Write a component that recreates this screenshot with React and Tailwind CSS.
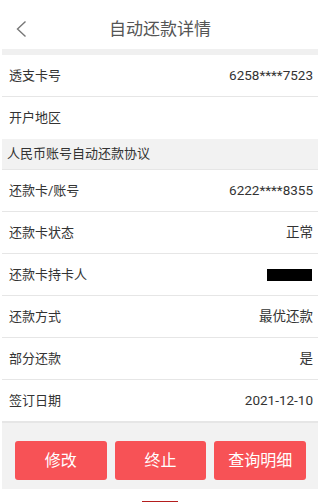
import React from "react";

const font = { fontFamily: 'Roboto, "Noto Sans CJK SC", sans-serif' };

function Row({ label, value, last }) {
  return (
    <div className={`flex items-center justify-between h-[42px] pl-[7px] pr-[5px] ${last ? "" : "border-b border-[#e6e6e6]"}`}>
      <span className="text-[13px] text-[#333]">{label}</span>
      {value}
    </div>
  );
}

export default function App() {
  const v = (t) => <span className="text-[13.5px] text-[#333]">{t}</span>;
  return (
    <div className="w-[320px] h-[502px] bg-white overflow-hidden flex flex-col" style={font}>
      <div className="relative h-[49px] flex items-center justify-center shrink-0">
        <svg className="absolute left-[15px] top-[20px]" width="13" height="18" viewBox="0 0 13 18" fill="none">
          <path d="M10.5 1.5 L2.5 9 L10.5 16.5" stroke="#777" strokeWidth="1.4" />
        </svg>
        <span className="text-[17px] text-[#555] mt-[10px]">自动还款详情</span>
      </div>
      <div className="h-[6px] bg-[#f0f0f0] shrink-0 mx-[2px]" />
      <div className="mx-[2px] flex flex-col">
        <Row label="透支卡号" value={v("6258****7523")} />
        <Row label="开户地区" value={null} last />
        <div className="h-[31px] bg-[#f2f2f2] flex items-center px-[5px] border-b border-[#e6e6e6]">
          <span className="text-[13px] text-[#333]">人民币账号自动还款协议</span>
        </div>
        <Row label="还款卡/账号" value={v("6222****8355")} />
        <Row label="还款卡状态" value={v("正常")} />
        <Row label="还款卡持卡人" value={<span className="w-[45px] h-[12px] bg-black mr-[1px]" />} />
        <Row label="还款方式" value={v("最优还款")} />
        <Row label="部分还款" value={v("是")} />
        <Row label="签订日期" value={v("2021-12-10")} />
        <div className="h-[67px] bg-[#f2f2f2] border-t border-[#e6e6e6] flex gap-[8px] pl-[13px] pr-[12px] pt-[18px]">
          {["修改", "终止", "查询明细"].map((t) => (
            <button key={t} className="flex-1 h-[39px] rounded-[3px] bg-[#f75256] text-white text-[16px] flex items-center justify-center">
              {t}
            </button>
          ))}
        </div>
      </div>
      <div className="flex-1 flex items-end justify-center">
        <div className="w-[36px] h-[1px] bg-[#b51d1d]" />
      </div>
    </div>
  );
}
